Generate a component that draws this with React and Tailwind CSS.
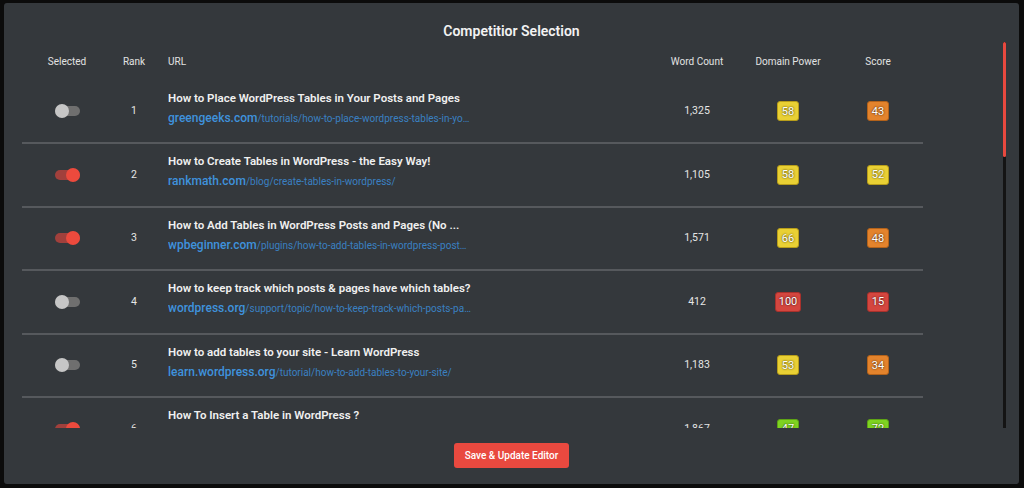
import { useState } from "react";

const rows = [
  {
    sel: false,
    title: "How to Place WordPress Tables in Your Posts and Pages",
    domain: "greengeeks.com",
    path: "/tutorials/how-to-place-wordpress-tables-in-your-posts-and-pages/",
    words: "1,325",
    power: 58,
    score: 43,
  },
  {
    sel: true,
    title: "How to Create Tables in WordPress - the Easy Way!",
    domain: "rankmath.com",
    path: "/blog/create-tables-in-wordpress/",
    words: "1,105",
    power: 58,
    score: 52,
  },
  {
    sel: true,
    title: "How to Add Tables in WordPress Posts and Pages (No ...",
    domain: "wpbeginner.com",
    path: "/plugins/how-to-add-tables-in-wordpress-posts-and-pages-no-html/",
    words: "1,571",
    power: 66,
    score: 48,
  },
  {
    sel: false,
    title: "How to keep track which posts & pages have which tables?",
    domain: "wordpress.org",
    path: "/support/topic/how-to-keep-track-which-posts-pages-have-which-tables/",
    words: "412",
    power: 100,
    score: 15,
  },
  {
    sel: false,
    title: "How to add tables to your site - Learn WordPress",
    domain: "learn.wordpress.org",
    path: "/tutorial/how-to-add-tables-to-your-site/",
    words: "1,183",
    power: 53,
    score: 34,
  },
  {
    sel: true,
    title: "How To Insert a Table in WordPress ?",
    domain: "wpdatatables.com",
    path: "/how-to-insert-a-table-in-wordpress/",
    words: "1,867",
    power: 47,
    score: 72,
  },
  {
    sel: false,
    title: "How to Create a Table in WordPress (Without Plugins)",
    domain: "kinsta.com",
    path: "/blog/wordpress-tables/",
    words: "2,040",
    power: 71,
    score: 61,
  },
];

// colour of a badge by value
const badgeColor = (v) => {
  if (v >= 90) return "bg-[#d4463f] border-[#a8312c]";
  if (v >= 70) return "bg-[#7ed321] border-[#5ea315]";
  if (v >= 50) return "bg-[#e9d034] border-[#b79d1a]";
  if (v >= 30) return "bg-[#e3832c] border-[#b3621a]";
  return "bg-[#d4463f] border-[#a8312c]";
};

const badgeColorPower = (v) => {
  if (v >= 90) return "bg-[#d4463f] border-[#a8312c]";
  if (v < 50) return "bg-[#7ed321] border-[#5ea315]";
  return "bg-[#e9d034] border-[#b79d1a]";
};

function Badge({ value, cls }) {
  return (
    <span
      className={`inline-flex h-[20px] min-w-[22px] items-center justify-center rounded-[3px] border px-[3px] text-[11px] leading-none text-white [text-shadow:0_0_2px_rgba(0,0,0,0.9)] ${cls}`}
    >
      {value}
    </span>
  );
}

function Toggle({ on, onClick }) {
  return (
    <button onClick={onClick} className="relative flex h-[14px] w-[25px] items-center">
      <span
        className={`h-[10px] w-[25px] rounded-full ${on ? "bg-[#a1403c]" : "bg-[#6f6f6f]"}`}
      />
      <span
        className={`absolute top-0 h-[14px] w-[14px] rounded-full ${
          on ? "right-0 bg-[#ec4a3d]" : "left-0 bg-[#c6c6c6]"
        }`}
      />
    </button>
  );
}

const grid = "grid grid-cols-[90px_44px_505px_72px_110px_70px] items-center";

export default function App() {
  const [sel, setSel] = useState(rows.map((r) => r.sel));

  return (
    <div className="h-[488px] w-[1024px] overflow-hidden bg-[#0b0b0b] pt-[3px] pl-[4px] font-['Roboto','Liberation_Sans',sans-serif]">
      <div className="flex h-[481px] w-[1015px] flex-col rounded-[3px] bg-[#34383c]">
        <h2 className="pt-[19px] text-center text-[14px] leading-[18px] font-semibold text-[#f2f2f2]">
          Competitior Selection
        </h2>

        <div className="mt-[2px] flex h-[386px] pl-[18px]">
          <div className="w-[981px] overflow-hidden">
            <div className="w-[901px]">
              <div className={`${grid} h-[38.5px] text-[10px] text-[#e2e2e2]`}>
                <span className="text-center">Selected</span>
                <span className="text-center">Rank</span>
                <span className="pl-3">URL</span>
                <span className="text-center">Word Count</span>
                <span className="text-center">Domain Power</span>
                <span className="text-center">Score</span>
              </div>

              {rows.map((r, i) => (
                <div
                  key={i}
                  className={`${grid} h-[63.5px] border-b-2 border-[#56595d]`}
                >
                  <div className="flex justify-center">
                    <Toggle
                      on={sel[i]}
                      onClick={() => setSel((s) => s.map((v, j) => (j === i ? !v : v)))}
                    />
                  </div>
                  <span className="text-center text-[10.5px] text-[#e6e6e6]">{i + 1}</span>
                  <div className="flex flex-col gap-[6px] pb-[6px] pl-3">
                    <span className="text-[11.5px] leading-[14px] font-semibold whitespace-nowrap text-[#f0f0f0]">
                      {r.title}
                    </span>
                    <span className="max-w-[303px] truncate text-[10px] leading-[14px] text-[#3a80c2]">
                      <span className="text-[12px] font-medium text-[#3f92dc]">{r.domain}</span>
                      <span>{r.path}</span>
                    </span>
                  </div>
                  <span className="text-center text-[10.5px] text-[#e6e6e6]">{r.words}</span>
                  <div className="flex justify-center">
                    <Badge value={r.power} cls={badgeColorPower(r.power)} />
                  </div>
                  <div className="flex justify-center">
                    <Badge value={r.score} cls={badgeColor(r.score)} />
                  </div>
                </div>
              ))}
            </div>
          </div>

          <div className="flex w-[3px] flex-col bg-[#141414]">
            <div className="h-[115px] rounded-full bg-[#e8493f]" />
          </div>
        </div>

        <div className="flex justify-center pt-[15px]">
          <button className="h-[25px] rounded-[3px] bg-[#e9493f] px-[11px] text-[10px] font-medium text-white">
            Save &amp; Update Editor
          </button>
        </div>
      </div>
    </div>
  );
}
